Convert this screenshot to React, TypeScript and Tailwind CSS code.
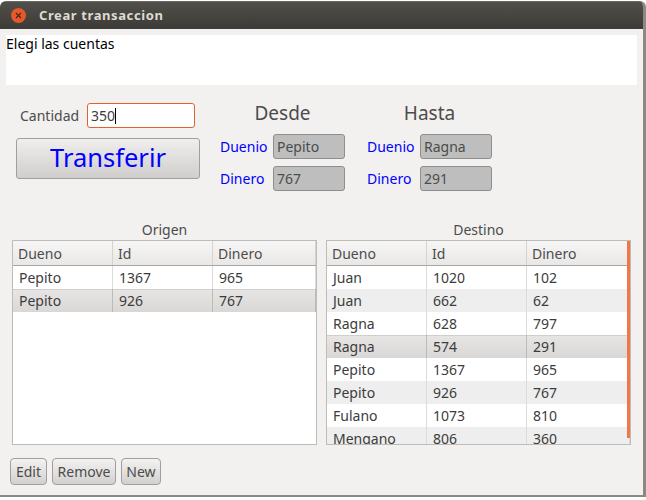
const font = { fontFamily: '"Noto Sans", sans-serif' };

const origen = [
  ["Pepito", "1367", "965"],
  ["Pepito", "926", "767"],
];
const destino = [
  ["Juan", "1020", "102"],
  ["Juan", "662", "62"],
  ["Ragna", "628", "797"],
  ["Ragna", "574", "291"],
  ["Pepito", "1367", "965"],
  ["Pepito", "926", "767"],
  ["Fulano", "1073", "810"],
  ["Mengano", "806", "360"],
];

function Table({ rows, selected, stripes, scroll }: { rows: string[][]; selected: number; stripes?: boolean; scroll?: boolean }) {
  const colW = ["w-[100px]", "w-[100px]", "flex-1"];
  return (
    <div className="relative w-[305px] h-[205px] border border-[#bfbcb8] bg-white overflow-hidden">
      <div className="flex h-[25px] border-b border-[#a8a6a3] bg-gradient-to-b from-[#f7f6f6] to-[#e9e8e6] text-[14px] text-[#4c4c4c]">
        {["Dueno", "Id", "Dinero"].map((h, i) => (
          <div key={h} className={`${colW[i]} pl-[5px] leading-[25px] border-r border-[#d5d3d0]`}>{h}</div>
        ))}
      </div>
      {rows.map((r, idx) => {
        const sel = idx === selected;
        const bg = sel
          ? "bg-gradient-to-b from-[#e7e6e5] to-[#d9d8d6] shadow-[inset_0_1px_0_#d0cfcd]"
          : stripes && idx % 2 === 1
            ? "bg-[#eeeeee]"
            : "bg-white";
        return (
          <div key={idx} className={`flex h-[23px] text-[14px] text-[#3c3c3c] ${bg}`}>
            {r.map((c, i) => (
              <div key={i} className={`${colW[i]} pl-[6px] leading-[23px] border-r ${sel ? "border-[#bdbbb8]" : "border-[#dcdbd9]"}`}>{c}</div>
            ))}
          </div>
        );
      })}
      {scroll && <div className="absolute right-0 top-0 bottom-[6px] w-[3px] bg-[#f07746]" />}
    </div>
  );
}

function Field({ label, value }: { label: string; value: string }) {
  return (
    <div className="flex items-center h-[25px]">
      <span className="w-[53px] text-[14px] text-[#0000ff]">{label}</span>
      <div className="w-[72px] h-[25px] pl-[3px] leading-[23px] rounded-[3px] border border-[#8f8e8c] bg-[#bebebe] text-[14px] text-[#4c4c4c]">{value}</div>
    </div>
  );
}

function Side({ title, owner, money }: { title: string; owner: string; money: string }) {
  return (
    <div className="flex flex-col w-[125px] pt-[1px]">
      <div className="h-[34px] text-center text-[19px] leading-[27px] text-[#4c4c4c]">{title}</div>
      <div className="flex flex-col gap-[7px]">
        <Field label="Duenio" value={owner} />
        <Field label="Dinero" value={money} />
      </div>
    </div>
  );
}

function SmallButton({ children, width }: { children: string; width: string }) {
  return (
    <div className={`${width} h-[27px] text-center leading-[25px] rounded-[4px] border border-[#a09f9d] bg-gradient-to-b from-[#f3f2f1] to-[#d2d1cf] text-[14px] text-[#4c4c4c]`}>{children}</div>
  );
}

export default function App() {
  return (
    <div className="w-[646px] h-[500px] bg-white overflow-hidden" style={font}>
      <div className="w-[646px] h-[496px] bg-[#f2f1f0] border-b-2 border-r-[3px] border-[#8a8986] rounded-t-[6px] overflow-hidden flex flex-col mt-[1px]">
        <div className="h-[28px] shrink-0 flex items-center pl-[11px] bg-gradient-to-b from-[#504f49] to-[#3c3b37] border-t border-[#6a6964]">
          <div className="w-[15px] h-[15px] rounded-full bg-[#e4582a] flex items-center justify-center">
            <svg width="7" height="7" viewBox="0 0 7 7"><path d="M1 1l5 5M6 1l-5 5" stroke="#4a2414" strokeWidth="1.1" /></svg>
          </div>
          <span className="ml-[13px] text-[13px] font-bold tracking-[0.6px] text-[#dfdbd2]">Crear transaccion</span>
        </div>
        <div className="pl-[6px] pr-[6px] pt-[6px]">
          <div className="h-[50px] bg-white text-[14px] leading-[18px] text-black">Elegi las cuentas</div>
        </div>
        <div className="flex mt-[14px] h-[106px]">
          <div className="w-[220px] pl-[16px]">
            <div className="flex items-center pl-[4px] h-[25px] mt-[4px]">
              <span className="w-[67px] text-[14px] text-[#4c4c4c]">Cantidad</span>
              <div className="w-[108px] h-[25px] pl-[3px] leading-[23px] rounded-[3px] border border-[#e0622f] bg-white text-[14px] text-[#3c3c3c] flex items-center">
                350<span className="w-px h-[16px] bg-black" />
              </div>
            </div>
            <div className="mt-[10px] w-[184px] h-[41px] rounded-[3px] border border-[#a09f9d] bg-gradient-to-b from-[#f0efee] to-[#cfcecc] text-center text-[25.5px] leading-[37px] text-[#0000ff]">Transferir</div>
          </div>
          <div className="flex gap-[22px]">
            <Side title="Desde" owner="Pepito" money="767" />
            <Side title="Hasta" owner="Ragna" money="291" />
          </div>
        </div>
        <div className="flex pl-[12px] gap-[9px] mt-[15px]">
          <div className="flex flex-col">
            <div className="h-[20px] text-center text-[14px] leading-[19px] text-[#4c4c4c]">Origen</div>
            <Table rows={origen} selected={1} />
          </div>
          <div className="flex flex-col">
            <div className="h-[20px] text-center text-[14px] leading-[19px] text-[#4c4c4c]">Destino</div>
            <Table rows={destino} selected={3} stripes scroll />
          </div>
        </div>
        <div className="flex gap-[5px] pl-[10px] mt-[13px]">
          <SmallButton width="w-[37px]">Edit</SmallButton>
          <SmallButton width="w-[64px]">Remove</SmallButton>
          <SmallButton width="w-[40px]">New</SmallButton>
        </div>
      </div>
    </div>
  );
}
